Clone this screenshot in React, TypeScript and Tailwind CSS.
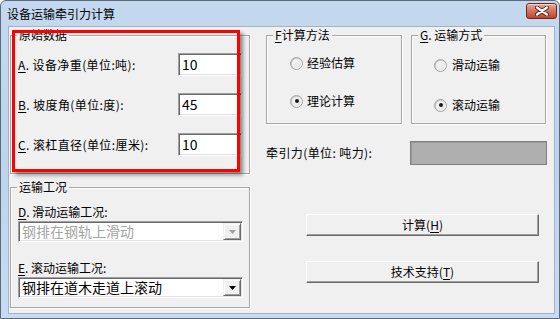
import type { ReactNode } from "react"

const font = "font-['SimSun','Noto_Sans_CJK_SC',sans-serif]"

// mnemonic letter with underline
function Key({ children }: { children: ReactNode }) {
  return <span className="underline underline-offset-2">{children}</span>
}

function GroupBox({
  title,
  className,
  children,
}: {
  title: ReactNode
  className: string
  children: ReactNode
}) {
  return (
    <div
      className={`relative border border-[#a6a6a6] shadow-[inset_1px_1px_0_#fff,1px_1px_0_#fff] ${className}`}
    >
      <span className="absolute top-[-8px] left-[6px] bg-[#f0f0f0] px-[2px] text-[12px] leading-[14px] text-black whitespace-nowrap">
        {title}
      </span>
      {children}
    </div>
  )
}

function Field({ label, value }: { label: ReactNode; value: string }) {
  return (
    <div className="flex items-center h-[23px]">
      <div className="w-[160px] text-[12px] leading-[14px] whitespace-nowrap tracking-[0.4px]">{label}</div>
      <div className="w-[64px] h-[23px] bg-white border border-t-[#a0a0a0] border-l-[#a0a0a0] border-r-white border-b-white shadow-[inset_1px_1px_0_#696969,inset_-1px_-1px_0_#e3e3e3] pl-[3px] flex items-center text-[14px] text-black">
        {value}
      </div>
    </div>
  )
}

function Radio({ label, checked, gap }: { label: string; checked?: boolean; gap: string }) {
  return (
    <div className={`flex items-center h-[14px] ${gap}`}>
      <div className="w-[13px] h-[13px] rounded-full border border-[#a2a2a2] bg-gradient-to-br from-[#d8d8d8] to-white flex items-center justify-center shadow-[inset_1px_1px_1px_rgba(0,0,0,0.15)]">
        <div className="w-[9px] h-[9px] rounded-full bg-gradient-to-br from-[#f6f6f6] to-[#e4e4e4] flex items-center justify-center">
          {checked && <div className="w-[4px] h-[4px] rounded-full bg-[#1a1a1a]" />}
        </div>
      </div>
      <span className="text-[12px] leading-[14px]">{label}</span>
    </div>
  )
}

function Combo({ value, disabled }: { value: string; disabled?: boolean }) {
  return (
    <div className="w-[225px] h-[21px] bg-white border border-t-[#a0a0a0] border-l-[#a0a0a0] border-r-white border-b-white shadow-[inset_1px_1px_0_#696969,inset_-1px_-1px_0_#e3e3e3] flex items-center pl-[3px] pr-[1px]">
      <span
        className={`flex-1 text-[14px] leading-[17px] whitespace-nowrap ${disabled ? "text-[#a3a3a3]" : "text-black"}`}
      >
        {value}
      </span>
      <div className="w-[18px] h-[17px] bg-[#f0f0f0] border border-t-[#f0f0f0] border-l-[#f0f0f0] border-r-[#696969] border-b-[#696969] shadow-[inset_1px_1px_0_#fff,inset_-1px_-1px_0_#a0a0a0] flex items-center justify-center">
        <svg width="7" height="4" viewBox="0 0 7 4">
          <path d="M0 0h7L3.5 4z" fill={disabled ? "#a0a0a0" : "#000"} />
        </svg>
      </div>
    </div>
  )
}

function Button({ children, className }: { children: ReactNode; className?: string }) {
  return (
    <button
      className={`w-[233px] h-[22px] bg-[#f0f0f0] border border-t-white border-l-white border-r-[#696969] border-b-[#696969] shadow-[inset_-1px_-1px_0_#a0a0a0] text-[12px] leading-[14px] text-black flex items-center justify-center ${className ?? ""}`}
    >
      {children}
    </button>
  )
}

export default function App() {
  return (
    <div
      className={`${font} relative w-[560px] h-[319px] overflow-hidden flex flex-col border border-[#5b6b7c] rounded-t-[6px] bg-gradient-to-b from-[#c4d8ef] via-[#bfd3ec] to-[#c9dbf0] pl-[7px] pr-[4px] pb-[4px] text-black`}
    >
      {/* Title bar */}
      <div className="h-[25px] flex items-center justify-between">
        <span className="ml-[-1px] text-[12px] leading-[14px] text-black">设备运输牵引力计算</span>
        <div className="mr-[-2px] mt-[-5px] w-[31px] h-[16px] rounded-[3px] border border-[#6b2a1f] bg-gradient-to-b from-[#e7a99a] via-[#d2735f] to-[#c2432c] flex items-center justify-center shadow-[inset_0_1px_0_rgba(255,255,255,0.5)]">
          <svg width="14" height="10" viewBox="0 0 14 10">
            <path d="M2 1.5L12 8.5M12 1.5L2 8.5" stroke="#5a1f15" strokeWidth="4" strokeLinecap="round" />
            <path d="M2 1.5L12 8.5M12 1.5L2 8.5" stroke="#fff" strokeWidth="2.2" strokeLinecap="round" />
          </svg>
        </div>
      </div>

      {/* Client area */}
      <div className="flex-1 bg-[#f0f0f0] border border-[#9fb3c9] flex">
        {/* Left column */}
        <div className="ml-[1px] w-[240px] flex flex-col pt-[8px]">
          <GroupBox title="原始数据" className="h-[139px] pt-[17px] pl-[7px] flex flex-col gap-[17px]">
            <Field label={<><Key>A</Key>. 设备净重(单位:吨):</>} value="10" />
            <Field label={<><Key>B</Key>. 坡度角(单位:度):</>} value="45" />
            <Field label={<><Key>C</Key>. 滚杠直径(单位:厘米):</>} value="10" />
          </GroupBox>

          <GroupBox title="运输工况" className="mt-[13px] h-[121px] pt-[17px] pl-[7px] flex flex-col">
            <div className="text-[12px] leading-[14px]">
              <Key>D</Key>. 滑动运输工况:
            </div>
            <div className="mt-[2px]">
              <Combo value="钢排在钢轨上滑动" disabled />
            </div>
            <div className="mt-[19px] text-[12px] leading-[14px]">
              <Key>E</Key>. 滚动运输工况:
            </div>
            <div className="mt-[2px]">
              <Combo value="钢排在道木走道上滚动" />
            </div>
          </GroupBox>
        </div>

        {/* Right column */}
        <div className="ml-[16px] w-[281px] flex flex-col pt-[8px]">
          <div className="flex gap-[9px]">
            <GroupBox
              title={<><Key>F</Key>计算方法</>}
              className="w-[136px] h-[89px] pt-[20px] pl-[23px] flex flex-col"
            >
              <Radio label="经验估算" gap="gap-[4px]" />
              <div className="mt-[24px]">
                <Radio label="理论计算" checked gap="gap-[4px]" />
              </div>
            </GroupBox>
            <GroupBox
              title={<><Key>G</Key>. 运输方式</>}
              className="w-[135px] h-[89px] pt-[22px] pl-[22px] flex flex-col"
            >
              <Radio label="滑动运输" gap="gap-[5px]" />
              <div className="mt-[26px]">
                <Radio label="滚动运输" checked gap="gap-[5px]" />
              </div>
            </GroupBox>
          </div>

          <div className="mt-[17px] flex items-center">
            <span className="w-[144px] text-[12px] leading-[14px] whitespace-nowrap tracking-[0.4px]">牵引力(单位: 吨力):</span>
            <div className="w-[137px] h-[24px] bg-[#afafaf] border border-[#808080] shadow-[inset_1px_1px_0_#9a9a9a]" />
          </div>

          <Button className="mt-[49px] ml-[40px]">
            计算(<Key>H</Key>)
          </Button>
          <Button className="mt-[25px] ml-[40px]">
            技术支持(<Key>T</Key>)
          </Button>
        </div>
      </div>

      {/* Red annotation frame drawn over the dialog */}
      <div className="absolute left-[11px] top-[29px] w-[228px] h-[142px] border-[3px] border-[#ff0000] shadow-[3px_3px_4px_rgba(0,0,0,0.45)] pointer-events-none" />
    </div>
  )
}
